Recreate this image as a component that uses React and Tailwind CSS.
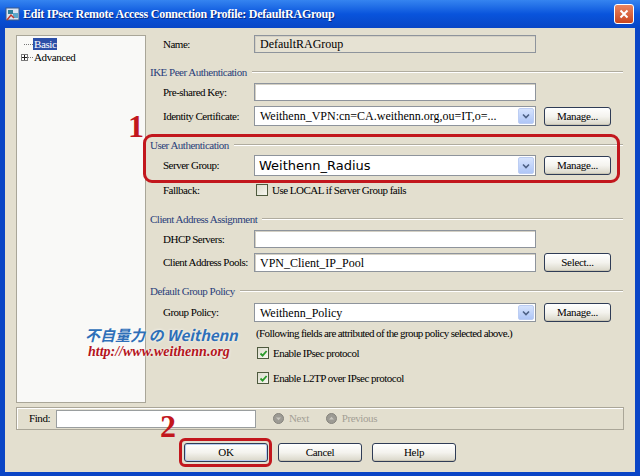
import React from "react";

const serif = { fontFamily: '"Liberation Serif", "Times New Roman", serif' };

function SectionHeader({ title, className = "" }) {
  return (
    <div className={`flex items-center h-[16px] ${className}`}>
      <span className="text-[11px] tracking-[-0.5px] text-[#2a407a] whitespace-nowrap">{title}</span>
      <div className="flex-1 ml-[5px] border-t border-t-[#b0ac9f] border-b border-b-white" />
    </div>
  );
}

function XpButton({ children, className = "" }) {
  return (
    <div
      className={`flex items-center justify-center rounded-[3px] border border-[#2f3c56] bg-linear-to-b from-white via-[#f4f3ee] to-[#d9d6c8] text-[11px] tracking-[-0.3px] text-black shadow-[inset_0_-1px_0_#c9c5b4] ${className}`}
    >
      {children}
    </div>
  );
}

function ComboArrow() {
  return (
    <div className="w-[16px] h-[calc(100%-2px)] my-[1px] mr-[1px] rounded-[2px] bg-linear-to-b from-[#d6e3fd] to-[#afc6f6] border border-[#bccdf3] flex items-center justify-center">
      <svg width="8" height="6" viewBox="0 0 8 6">
        <path d="M1 1.5 L4 4.5 L7 1.5" stroke="#4d6185" strokeWidth="1.6" fill="none" />
      </svg>
    </div>
  );
}

function Row({ label, height, className = "", children, button }) {
  return (
    <div className={`flex items-center ${className}`} style={{ height }}>
      <div className="w-[104px] pl-[13px] text-[11px] tracking-[-0.5px] text-black whitespace-nowrap">{label}</div>
      {children}
      {button && <XpButton className="ml-[8px] w-[67px] h-[19px]">{button}</XpButton>}
    </div>
  );
}

function TextBox({ value = "", disabled }) {
  return (
    <div
      className={`w-[282px] h-full flex items-center border border-[#8e949c] shadow-[inset_1px_1px_0_#d4d0c4] px-[5px] overflow-hidden whitespace-nowrap text-[12px] ${
        disabled ? "bg-[#e6e2d3]" : "bg-white"
      }`}
    >
      {value}
    </div>
  );
}

function Combo({ value, big }) {
  return (
    <div className="w-[282px] h-full flex items-center border border-[#8e949c] bg-white">
      <div
        className={`flex-1 whitespace-nowrap overflow-hidden ${big ? "text-[13px] pl-[4px]" : "text-[12px] pl-[5px]"}`}
        style={big ? { fontFamily: '"DejaVu Sans", Verdana, sans-serif' } : undefined}
      >
        {value}
      </div>
      <ComboArrow />
    </div>
  );
}

function CheckBox({ checked }) {
  return (
    <div className="w-[12px] h-[12px] border border-[#4e5a3e] bg-linear-to-br from-[#dcdccd] to-[#f7f7f0] flex items-center justify-center">
      {checked && (
        <svg width="9" height="9" viewBox="0 0 9 9">
          <path d="M1.5 4.5 L3.6 6.6 L7.6 2" stroke="#2a9a2a" strokeWidth="1.8" fill="none" />
        </svg>
      )}
    </div>
  );
}

function NavIcon({ up }) {
  return (
    <svg width="11" height="11" viewBox="0 0 11 11">
      <circle cx="5.5" cy="5.5" r="5" fill="#9d9b94" stroke="#85837c" />
      <path d={up ? "M3 6.5 L5.5 3.8 L8 6.5 Z" : "M3 4.5 L5.5 7.2 L8 4.5 Z"} fill="#c9c7c0" />
    </svg>
  );
}

function TitleIcon() {
  return (
    <svg width="16" height="16" viewBox="0 0 16 16">
      <rect x="1" y="2" width="13" height="12" fill="#d8e4f4" stroke="#3b5a8a" />
      <rect x="3" y="4" width="5" height="4" fill="#2f7f9a" />
      <rect x="8" y="7" width="5" height="5" fill="#5aa7c9" />
      <path d="M2 14 L6 9 L9 12" stroke="#c0392b" strokeWidth="1.5" fill="none" />
    </svg>
  );
}

export default function App() {
  return (
    <div className="relative w-[640px] h-[476px] overflow-hidden bg-[#0a45c6] flex flex-col text-black" style={serif}>
      {/* title bar */}
      <div className="h-[28px] flex items-center bg-linear-to-b from-[#3584f0] via-[#0954dc] to-[#0846c6] pl-[5px] pr-[6px]">
        <TitleIcon />
        <div className="ml-[2px] text-[12px] font-bold text-white tracking-[-0.25px] [text-shadow:1px_1px_0_#0a2a80]">
          Edit IPsec Remote Access Connection Profile: DefaultRAGroup
        </div>
        <div className="ml-auto w-[20px] h-[20px] rounded-[3px] border border-white bg-linear-to-b from-[#e9845f] to-[#c9451d] flex items-center justify-center">
          <svg width="10" height="10" viewBox="0 0 10 10">
            <path d="M1.5 1.5 L8.5 8.5 M8.5 1.5 L1.5 8.5" stroke="white" strokeWidth="2" />
          </svg>
        </div>
      </div>

      {/* dialog body */}
      <div className="flex-1 mx-[5px] mb-[4px] bg-[#e3dfcf] flex flex-col">
        <div className="flex items-start pt-[7px]">
          {/* tree */}
          <div className="ml-[11px] w-[130px] h-[368px] bg-[#f9f9f7] border border-[#a9a698] text-[11px] tracking-[-0.4px]">
            <div className="pt-[2px]">
              <div className="flex items-center h-[12px]">
                <div className="ml-[7px] w-[9px] border-t border-dotted border-[#777]" />
                <span className="bg-[#2c4fa8] text-white px-[1px] leading-[12px]">Basic</span>
              </div>
              <div className="flex items-center h-[13px] mt-[1px]">
                <div className="ml-[4px] w-[7px] h-[7px] border border-[#7a7a7a] bg-white flex items-center justify-center">
                  <svg width="5" height="5" viewBox="0 0 5 5">
                    <path d="M0 2.5 H5 M2.5 0 V5" stroke="#222" strokeWidth="1" />
                  </svg>
                </div>
                <div className="w-[5px] border-t border-dotted border-[#777]" />
                <span className="ml-[1px]">Advanced</span>
              </div>
            </div>
          </div>

          {/* form */}
          <div className="ml-[4px] w-[473px] flex flex-col">
            <Row label="Name:" height={18}>
              <TextBox value="DefaultRAGroup" disabled />
            </Row>

            <SectionHeader title="IKE Peer Authentication" className="mt-[11px]" />
            <Row label="Pre-shared Key:" height={18} className="mt-[3px]">
              <TextBox />
            </Row>
            <Row label="Identity Certificate:" height={20} className="mt-[5px]" button="Manage...">
              <Combo value="Weithenn_VPN:cn=CA.weithenn.org,ou=IT,o=..." />
            </Row>

            <SectionHeader title="User Authentication" className="mt-[11px]" />
            <Row label="Server Group:" height={21} className="mt-[2px]" button="Manage...">
              <Combo value="Weithenn_Radius" big />
            </Row>
            <div className="flex items-center h-[14px] mt-[7px]">
              <div className="w-[104px] pl-[13px] text-[11px] tracking-[-0.5px]">Fallback:</div>
              <div className="ml-[2px]">
                <CheckBox />
              </div>
              <span className="ml-[4px] text-[11px] tracking-[-0.5px]">Use LOCAL if Server Group fails</span>
            </div>

            <SectionHeader title="Client Address Assignment" className="mt-[14px]" />
            <Row label="DHCP Servers:" height={18} className="mt-[3px]">
              <TextBox />
            </Row>
            <Row label="Client Address Pools:" height={19} className="mt-[5px]" button="Select...">
              <TextBox value="VPN_Client_IP_Pool" />
            </Row>

            <SectionHeader title="Default Group Policy" className="mt-[11px]" />
            <Row label="Group Policy:" height={19} className="mt-[4px]" button="Manage...">
              <Combo value="Weithenn_Policy" />
            </Row>
            <div className="h-[12px] mt-[5px] pl-[106px] flex items-center text-[11px] tracking-[-0.6px] whitespace-nowrap">
              (Following fields are attributed of the group policy selected above.)
            </div>
            <div className="h-[12px] mt-[8px] pl-[107px] flex items-center">
              <CheckBox checked />
              <span className="ml-[4px] text-[11px] tracking-[-0.5px]">Enable IPsec protocol</span>
            </div>
            <div className="h-[12px] mt-[13px] pl-[107px] flex items-center">
              <CheckBox checked />
              <span className="ml-[4px] text-[11px] tracking-[-0.5px]">Enable L2TP over IPsec protocol</span>
            </div>
          </div>
        </div>

        {/* find bar */}
        <div className="ml-[11px] mt-[4px] w-[608px] h-[23px] border border-[#aaa698] shadow-[inset_1px_1px_0_white] flex items-center text-[11px] tracking-[-0.4px]">
          <span className="ml-[12px] w-[27px]">Find:</span>
          <div className="w-[200px] h-[18px] bg-white border border-[#9a9e9f]" />
          <div className="ml-[17px]">
            <NavIcon />
          </div>
          <span className="ml-[5px] text-[#a3a096]">Next</span>
          <div className="ml-[17px]">
            <NavIcon up />
          </div>
          <span className="ml-[5px] text-[#a3a096]">Previous</span>
        </div>

        {/* buttons */}
        <div className="mt-[13px] flex justify-center gap-[10px]">
          <XpButton className="w-[84px] h-[19px] border-[#2b4b8c] shadow-[inset_0_0_0_1px_#b9cdf0]">OK</XpButton>
          <XpButton className="w-[84px] h-[19px]">Cancel</XpButton>
          <XpButton className="w-[84px] h-[19px]">Help</XpButton>
        </div>
      </div>

      {/* annotations */}
      <div className="absolute left-[143px] top-[134px] w-[477px] h-[49px] border-[3px] border-[#c2171d] rounded-[9px]" />
      <div className="absolute left-[179px] top-[438px] w-[93px] h-[29px] border-[3px] border-[#c2171d] rounded-[6px]" />
      <div className="absolute left-[128px] top-[110px] text-[32px] leading-none font-bold text-[#c2171d]">1</div>
      <div className="absolute left-[160px] top-[410px] text-[32px] leading-none font-bold text-[#c2171d]">2</div>

      {/* watermark */}
      <div className="absolute left-[85px] top-[327px] flex flex-col">
        <div
          className="text-[15px] leading-[16px] font-bold italic text-[#2e6fb8] whitespace-nowrap [text-shadow:0_0_3px_white]"
          style={{ fontFamily: '"Noto Sans CJK JP", "Noto Sans", sans-serif' }}
        >
          不自量力 の Weithenn
        </div>
        <div className="ml-[3px] mt-[2px] text-[14px] leading-[14px] font-bold italic text-[#b5141c] whitespace-nowrap [text-shadow:0_0_3px_white]">
          http://www.weithenn.org
        </div>
      </div>
    </div>
  );
}
